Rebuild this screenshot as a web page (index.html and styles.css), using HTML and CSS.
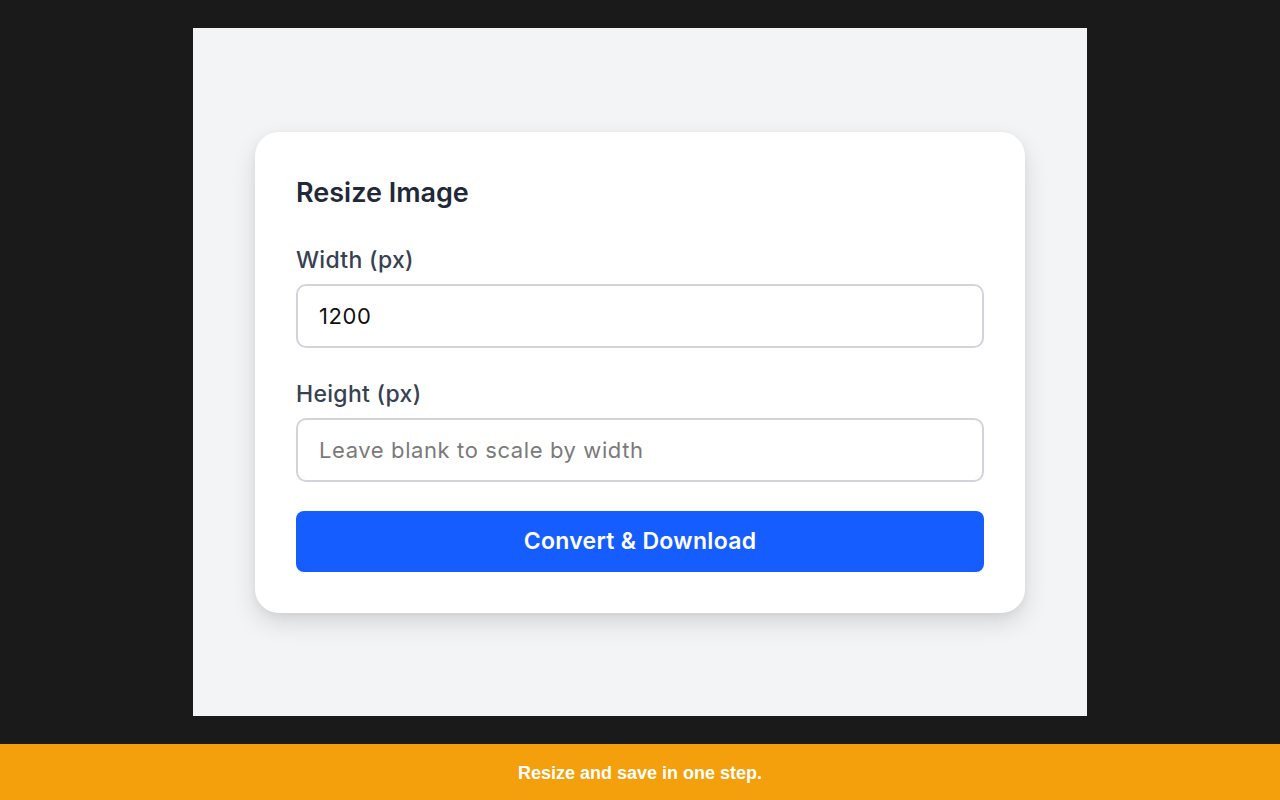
FILE: index.html
```html
<!DOCTYPE html>
<html lang="en">
<head>
    <meta charset="UTF-8">
    <meta name="viewport" content="width=device-width, initial-scale=1.0">
    <title>Resize Image</title>
    <link rel="stylesheet" href="styles.css">
</head>
<body>
    <main class="stage">
        <div class="card">
            <h1>Resize Image</h1>
            <div class="field">
                <label for="width">Width (px)</label>
                <input type="text" id="width" value="1200">
            </div>
            <div class="field">
                <label for="height">Height (px)</label>
                <input type="text" id="height" placeholder="Leave blank to scale by width">
            </div>
            <button type="button">Convert &amp; Download</button>
        </div>
    </main>

    <div class="footer">
        <p>Resize and save in one step.</p>
    </div>
</body>
</html>
```

FILE: styles.css
```css
body {
    margin: 0;
    padding: 28px 0 0;
    background: #1a1a1a;
    font-family: 'Inter', 'Noto Sans', sans-serif;
    height: 800px;
    box-sizing: border-box;
    overflow: hidden;
}

.stage {
    width: 894px;
    height: 688px;
    margin: 0 auto;
    background: #f3f4f6;
    display: flex;
    justify-content: center;
    align-items: center;
}

.card {
    width: 770px;
    box-sizing: border-box;
    padding: 41px;
    background: #fff;
    border-radius: 24px;
    box-shadow: 0 10px 24px rgba(0, 0, 0, 0.12), 0 3px 8px rgba(0, 0, 0, 0.05);
}

h1 {
    margin: 0 0 31px;
    font-size: 27px;
    line-height: 40px;
    font-weight: 600;
    color: #1f2937;
}

.field {
    display: flex;
    flex-direction: column;
    gap: 7px;
    margin-bottom: 30px;
}

.field label {
    font-size: 23px;
    line-height: 33px;
    font-weight: 500;
    letter-spacing: 0.3px;
    color: #374151;
}

.field input {
    height: 64px;
    box-sizing: border-box;
    padding: 0 21px;
    border: 2px solid #d1d5db;
    border-radius: 10px;
    font-family: inherit;
    font-size: 22px;
    letter-spacing: 0.6px;
    color: #111;
    outline: none;
}

.field input::placeholder {
    color: #7a7a7a;
}

button {
    display: block;
    width: 100%;
    height: 61px;
    margin-top: -1px;
    border: none;
    border-radius: 8px;
    background: #165dff;
    color: #fff;
    font-family: inherit;
    font-size: 23px;
    font-weight: 600;
    letter-spacing: 0.3px;
    cursor: pointer;
}

.footer {
    position: fixed;
    left: 0;
    bottom: 0;
    width: 100%;
    height: 56px;
    background: #f4a00c;
    display: flex;
    align-items: center;
    justify-content: center;
}

.footer p {
    margin: 0;
    padding-top: 3px;
    font-family: 'Liberation Sans', Arial, sans-serif;
    font-size: 18px;
    font-weight: bold;
    color: #fff;
}
```
